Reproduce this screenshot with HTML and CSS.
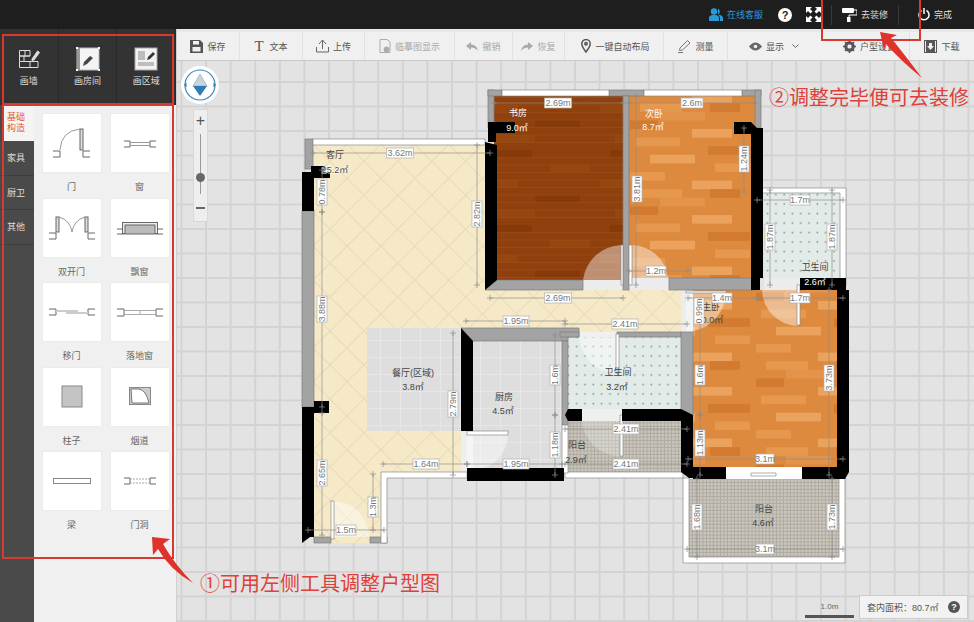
FILE: index.html
```html
<!DOCTYPE html>
<html lang="zh-CN">
<head>
    <meta charset="UTF-8">
    <title>户型编辑</title>
    <link rel="stylesheet" href="styles.css">
</head>
<body>
<div class="page">
    <!-- 顶栏 -->
    <header class="topbar">
        <a class="top-item top-blue"><svg width="14" height="13" viewBox="0 0 14 13"><circle cx="5" cy="3.5" r="3.2" fill="#2a9ad6"/><path d="M0 13V10Q0 7.5 3 7H7Q10 7.5 10 10V13Z" fill="#2a9ad6"/><path d="M9 .6A3.2 3.2 0 0 1 9 6.4Q13.8 7 14 10V13H11V10Q11 8 9 6.4Z" fill="#2a9ad6"/></svg>在线客服</a>
        <span class="top-help">?</span>
        <svg class="top-full" width="15" height="15" viewBox="0 0 15 15" fill="#fff"><path d="M0 0H6L4 2 6.500 4.500 4.500 6.500 2 4 0 6ZM15 0V6L13 4 10.500 6.500 8.500 4.500 11 2 9 0ZM0 15V9L2 11 4.500 8.500 6.500 10.500 4 13 6 15ZM15 15H9L11 13 8.500 10.500 10.500 8.500 13 11 15 9Z"/></svg>
        <a class="top-item top-btn top-decor"><svg width="15" height="14" viewBox="0 0 15 14" fill="#fff"><rect width="12" height="5" rx="1"/><path d="M12 2H15V7H7V9" fill="none" stroke="#fff"/><rect x="5" y="9" width="3.500" height="5"/></svg>去装修</a>
        <a class="top-item top-btn top-done"><svg width="12" height="13" viewBox="0 0 12 13" fill="none" stroke="#fff" stroke-width="1.500"><path d="M3.500 2.500A5 5 0 1 0 8.500 2.500"/><path d="M6 0V6"/></svg>完成</a>
    </header>

    <div class="main">
        <!-- 左侧工具 -->
        <aside class="side">
            <div class="draw-tools">
                <div class="draw-tool">
                    <svg width="24" height="24" viewBox="0 0 24 24" fill="none" stroke="#ddd"><path d="M2.500 3.500H13V9H2.500ZM2.500 9V14.500M2.500 14.500H21V20.500H2.500V14.500M8 3.500V9M13 14.500V20.500M7 9V14.500M2.500 9H13"/><path d="M15 12L20.500 4 22.500 5.500 17 13 15 13.500Z" fill="#ddd"/></svg>
                    <span>画墙</span>
                </div>
                <div class="draw-tool">
                    <svg width="24" height="24" viewBox="0 0 24 24"><rect x="1" y="1" width="22" height="22" fill="#f4f4f4" stroke="#bbb"/><path d="M1 1H4V23H1Z" fill="#999"/><path d="M7 19L8 15 14 9 17 11 11 17Z" fill="#444"/><rect x="0" y="0" width="2" height="2" fill="#fff"/><rect x="22" y="0" width="2" height="2" fill="#fff"/><rect x="0" y="22" width="2" height="2" fill="#fff"/><rect x="22" y="22" width="2" height="2" fill="#fff"/></svg>
                    <span>画房间</span>
                </div>
                <div class="draw-tool">
                    <svg width="24" height="24" viewBox="0 0 24 24"><rect x="1" y="1" width="22" height="22" fill="#f2f2f2" stroke="#aaa"/><rect x="4" y="4" width="7" height="9" fill="#bdbdbd"/><rect x="4" y="15" width="16" height="4" fill="#bdbdbd"/><path d="M13 13L14 10 19 5 21 7 16 12Z" fill="#333"/></svg>
                    <span>画区域</span>
                </div>
            </div>
            <div class="panel">
                <nav class="tabs">
                    <div class="tab tab-on">基础<br>构造</div>
                    <div class="tab">家具</div>
                    <div class="tab">厨卫</div>
                    <div class="tab">其他</div>
                </nav>
                <div class="parts">
                    <div class="part">
                        <div class="tile"><svg width="60" height="60" viewBox="0 0 60 60" class="glyph"><path d="M11 38H18V44H11M48 38H41V44H48"/><rect x="38" y="16" width="3" height="21" fill="#ddd"/><path d="M18 37Q19 18 38 16" stroke="#999"/></svg></div>
                        <span>门</span>
                    </div>
                    <div class="part">
                        <div class="tile"><svg width="60" height="60" viewBox="0 0 60 60" class="glyph"><path d="M14 28H20V34H14M46 28H40V34H46"/><path d="M20 29.500H40M20 32.500H40" stroke="#999"/></svg></div>
                        <span>窗</span>
                    </div>
                    <div class="part">
                        <div class="tile"><svg width="60" height="60" viewBox="0 0 60 60" class="glyph"><path d="M7 35H14V41H7M53 35H46V41H53"/><rect x="14" y="19" width="3" height="15" fill="#ddd"/><rect x="43" y="19" width="3" height="15" fill="#ddd"/><path d="M17 19Q28 22 30 34Q32 22 43 19" stroke="#999"/></svg></div>
                        <span>双开门</span>
                    </div>
                    <div class="part">
                        <div class="tile"><svg width="60" height="60" viewBox="0 0 60 60" class="glyph"><path d="M7 31H14V36H7M53 31H46V36H53"/><rect x="12.500" y="24.500" width="35" height="11" fill="#eee"/><rect x="15" y="27" width="30" height="9" fill="#bbb"/></svg></div>
                        <span>飘窗</span>
                    </div>
                    <div class="part">
                        <div class="tile"><svg width="60" height="60" viewBox="0 0 60 60" class="glyph"><path d="M7 27H14V33H7M53 27H46V33H53"/><rect x="14" y="28" width="22" height="2" fill="#ccc" stroke="none"/><rect x="24" y="30" width="22" height="2" fill="#ccc" stroke="none"/></svg></div>
                        <span>移门</span>
                    </div>
                    <div class="part">
                        <div class="tile"><svg width="60" height="60" viewBox="0 0 60 60" class="glyph"><path d="M7 27H14V34H7M53 27H46V34H53"/><path d="M14 28.500H46M14 32.500H46M30 29V32" stroke="#aaa"/></svg></div>
                        <span>落地窗</span>
                    </div>
                    <div class="part">
                        <div class="tile"><svg width="60" height="60" viewBox="0 0 60 60" class="glyph"><rect x="20" y="19" width="20" height="21" fill="#c4c4c4" stroke="#888"/></svg></div>
                        <span>柱子</span>
                    </div>
                    <div class="part">
                        <div class="tile"><svg width="60" height="60" viewBox="0 0 60 60" class="glyph"><rect x="19.500" y="20.500" width="21" height="17" fill="#ccc" stroke="#888"/><path d="M21 22H29Q36 23 39 36H22Z" fill="#fff" stroke="#777"/></svg></div>
                        <span>烟道</span>
                    </div>
                    <div class="part">
                        <div class="tile"><svg width="60" height="60" viewBox="0 0 60 60" class="glyph"><rect x="11.500" y="27.500" width="37" height="5" fill="#fff" stroke="#888"/></svg></div>
                        <span>梁</span>
                    </div>
                    <div class="part">
                        <div class="tile"><svg width="60" height="60" viewBox="0 0 60 60" class="glyph"><path d="M14 27H20V33H14M46 27H40V33H46"/><path d="M20 28H40M20 32H40" stroke="#aaa" stroke-dasharray="2 1"/></svg></div>
                        <span>门洞</span>
                    </div>
                </div>
            </div>
        </aside>

        <div class="work">
            <!-- 工具条 -->
            <div class="toolbar">
                <a class="tb w63"><svg width="13" height="13" viewBox="0 0 13 13"><path d="M0 0H10L13 3V13H0Z" fill="#555"/><rect x="3" y="1" width="6" height="3.500" fill="#f0f0f0"/><rect x="2.500" y="7" width="8" height="4.500" fill="#f0f0f0"/></svg>保存</a>
                <a class="tb w63"><span class="tb-t">T</span>文本</a>
                <a class="tb w62"><svg width="13" height="14" viewBox="0 0 13 14" fill="none" stroke="#666"><path d="M3 5L6.500 1 10 5M6.500 1V10M.5 8V13H12.500V8"/></svg>上传</a>
                <a class="tb w90 tb-off"><svg width="12" height="14" viewBox="0 0 12 14" fill="none" stroke="#aaa"><path d="M1 .5H8L11 3V13.500H1Z"/><circle cx="7.500" cy="10.500" r="2.500" fill="#aaa"/></svg>临摹图显示</a>
                <a class="tb w58 tb-off"><svg width="12" height="9" viewBox="0 0 12 9" fill="#aaa"><path d="M0 4L5 0V2.500Q11 2.500 12 9 9.500 5.500 5 5.500V8Z"/></svg>撤销</a>
                <a class="tb w52 tb-off"><svg width="12" height="9" viewBox="0 0 12 9" fill="#aaa"><path d="M12 4L7 0V2.500Q1 2.500 0 9 2.500 5.500 7 5.500V8Z"/></svg>恢复</a>
                <a class="tb w99 tb-pin"><svg width="10" height="14" viewBox="0 0 10 14" fill="none" stroke="#555" stroke-width="1.500"><path d="M5 13Q.8 7.500.8 4.800A4.200 4.200 0 0 1 9.200 4.800Q9.200 7.500 5 13Z"/><circle cx="5" cy="4.800" r="1.200"/></svg>一键自动布局</a>
                <a class="tb w64"><svg width="14" height="14" viewBox="0 0 14 14" fill="none" stroke="#777"><path d="M1 13.500H6M2.500 11.500L3 9 10.500 1.500 13 4 5.500 11Z"/></svg>测量</a>
                <a class="tb w102 tb-view"><svg width="13" height="9" viewBox="0 0 13 9"><path d="M0 4.500Q6.500 -3.500 13 4.500 6.500 12.500 0 4.500Z" fill="#666"/><circle cx="6.500" cy="4.500" r="1.800" fill="#f0f0f0"/></svg>显示<svg class="tb-caret" width="7" height="5" viewBox="0 0 7 5" fill="none" stroke="#666"><path d="M.5 .5L3.500 3.500 6.500 .5"/></svg></a>
                <a class="tb w80"><svg width="13" height="13" viewBox="0 0 13 13"><circle cx="6.500" cy="6.500" r="4" fill="none" stroke="#555" stroke-width="2.500"/><path d="M6.500 0V13M0 6.500H13M2 2L11 11M11 2L2 11" stroke="#555" stroke-width="1.500"/><circle cx="6.500" cy="6.500" r="2" fill="#f0f0f0"/></svg>户型设置</a>
                <a class="tb tb-last"><svg width="13" height="13" viewBox="0 0 13 13"><rect x=".5" y=".5" width="12" height="12" fill="none" stroke="#555"/><path d="M2 1H11V12H2Z" fill="#555"/><path d="M5 3H8V6H10L6.500 10 3 6H5Z" fill="#f0f0f0"/></svg>下载</a>
            </div>

            <!-- 画布 -->
            <div class="canvas">
                <svg class="plan" width="797" height="561" viewBox="177 61 797 561">
                    <defs>
                        <pattern id="wood" width="126" height="86" patternUnits="userSpaceOnUse">
                            <rect width="126" height="86" fill="#de8a3e"/>
                            <rect x="0" y="0" width="35" height="8.600" fill="#e6984f"/>
                            <rect x="62" y="8.600" width="40" height="8.600" fill="#eaa25c"/>
                            <rect x="10" y="17.200" width="42" height="8.600" fill="#e6984f"/>
                            <rect x="80" y="17.200" width="30" height="8.600" fill="#d17a30"/>
                            <rect x="30" y="25.800" width="45" height="8.600" fill="#e3934a"/>
                            <rect x="0" y="34.400" width="28" height="8.600" fill="#d17a30"/>
                            <rect x="62" y="43" width="40" height="8.600" fill="#eaa25c"/>
                            <rect x="5" y="51.600" width="45" height="8.600" fill="#e6984f"/>
                            <rect x="78" y="60.200" width="42" height="8.600" fill="#d17a30"/>
                            <rect x="20" y="68.800" width="45" height="8.600" fill="#eaa25c"/>
                            <rect x="85" y="77.400" width="35" height="8.600" fill="#e6984f"/>
                        </pattern>
                        <pattern id="woodDark" width="120" height="75" patternUnits="userSpaceOnUse">
                            <rect width="120" height="75" fill="#8f400c"/>
                            <rect x="10" y="0" width="42" height="7.500" fill="#873a09"/>
                            <rect x="70" y="15" width="40" height="7.500" fill="#964710"/>
                            <rect x="0" y="30" width="38" height="7.500" fill="#964710"/>
                            <rect x="55" y="45" width="45" height="7.500" fill="#873a09"/>
                            <rect x="15" y="60" width="40" height="7.500" fill="#964710"/>
                            <path d="M0 7.500H120M0 15H120M0 22.500H120M0 30H120M0 37.500H120M0 45H120M0 52.500H120M0 60H120M0 67.500H120" stroke="#9e5220" stroke-width=".5"/>
                        </pattern>
                        <pattern id="cream" width="24" height="24" patternUnits="userSpaceOnUse" patternTransform="rotate(45 313 145)">
                            <rect width="24" height="24" fill="#f5e9c7"/>
                            <path d="M0 .5H24M.5 0V24" stroke="#e8dbb8"/>
                        </pattern>
                        <pattern id="dots" width="8.300" height="9.500" patternUnits="userSpaceOnUse">
                            <rect width="8.300" height="9.500" fill="#e3ebe8"/>
                            <circle cx="4" cy="4.500" r=".9" fill="#7f9a92"/>
                        </pattern>
                        <pattern id="mosaic" width="3.500" height="3.500" patternUnits="userSpaceOnUse">
                            <rect width="3.500" height="3.500" fill="#aeaaa0"/>
                            <rect width="2.500" height="2.500" fill="#cbc7be"/>
                        </pattern>
                        <pattern id="tile" width="20" height="17" patternUnits="userSpaceOnUse">
                            <rect width="20" height="17" fill="#dedede"/>
                            <path d="M0 .5H20M.5 0V17" stroke="#e7e7e7"/>
                        </pattern>
                        <marker id="tick" markerWidth="6" markerHeight="6" refX="3" refY="3" markerUnits="userSpaceOnUse">
                            <path d="M3 0V6M0 3H6" stroke="#8c8c8c" stroke-opacity=".7"/>
                        </marker>
                    </defs>

                    <!-- 地面 -->
                    <path d="M313 145H490V290H684V332H565V328H461V472H381V537H370V543H331V537H313Z" fill="url(#cream)"/>
                    <rect x="367" y="328" width="94" height="103" fill="url(#tile)"/>
                    <rect x="473" y="341" width="89" height="127" fill="url(#tile)"/>
                    <rect x="461" y="431" width="12" height="41" fill="#eeeeee"/>
                    <rect x="494" y="96" width="129" height="184" fill="url(#woodDark)"/>
                    <rect x="629" y="96" width="126" height="182" fill="url(#wood)"/>
                    <path d="M764 193H840V290H764Z" fill="url(#dots)"/>
                    <rect x="764" y="278" width="36" height="12" fill="#ececec"/>
                    <rect x="693" y="290" width="144" height="177" fill="url(#wood)"/>
                    <rect x="568" y="337" width="113" height="72" fill="url(#dots)"/>
                    <rect x="568" y="421" width="113" height="51" fill="url(#mosaic)"/>
                    <rect x="689" y="479" width="150" height="78" fill="url(#mosaic)"/>

                    <!-- 门洞 -->
                    <rect x="583" y="280" width="40" height="10" fill="#ececec"/>
                    <rect x="629" y="278" width="40" height="12" fill="#ececec"/>
                    <rect x="681" y="290" width="12" height="42" fill="#ececec"/>
                    <rect x="579" y="332" width="38" height="5" fill="#f0f0f0"/>
                    <rect x="582" y="409" width="40" height="12" fill="#efefef"/>

                    <!-- 开门扇形 -->
                    <g fill="#fff" fill-opacity=".42">
                        <path d="M583 280A40 40 0 0 1 621 245V280Z"/>
                        <path d="M632 245A37 37 0 0 1 668 278H632Z"/>
                        <path d="M762 290A37 37 0 0 0 797 326V290Z"/>
                        <path d="M686 293H726A40 40 0 0 1 693 331H686Z"/>
                        <path d="M334 501A36 36 0 0 1 369 537H334Z"/>
                        <path d="M467 435H508A36 36 0 0 1 476 470H467Z"/>
                        <path d="M579 337A38 38 0 0 0 616 373V337Z"/>
                        <path d="M582 421A38 38 0 0 0 620 456V421Z" fill-opacity=".25"/>
                    </g>

                    <!-- 灰墙 -->
                    <g fill="#a3a3a3" stroke="#7d7d7d" stroke-width=".7">
                        <rect x="305" y="139" width="8" height="30"/>
                        <rect x="302" y="211" width="12" height="196"/>
                        <rect x="314" y="537" width="17" height="6"/>
                        <rect x="370" y="537" width="17" height="6"/>
                        <path d="M497 280H583V290H485Z"/>
                        <rect x="488" y="90" width="6" height="38"/>
                        <rect x="488" y="90" width="14" height="6"/>
                        <rect x="609" y="90" width="35" height="6"/>
                        <rect x="742" y="90" width="19" height="6"/>
                        <rect x="755" y="90" width="6" height="38"/>
                        <rect x="623" y="96" width="6" height="194"/>
                        <path d="M669 278H751L757 290H669Z"/>
                        <path d="M461 328H579V337H568V341H473Z"/>
                        <rect x="562" y="341" width="6" height="84"/>
                        <rect x="560" y="332" width="19" height="5"/>
                        <rect x="617" y="332" width="64" height="5"/>
                        <rect x="681" y="332" width="12" height="83"/>
                    </g>

                    <!-- 白墙窗户 -->
                    <g fill="#fff" stroke="#8a8a8a" stroke-width=".7">
                        <rect x="313" y="139" width="172" height="6"/>
                        <rect x="502" y="90" width="107" height="6"/>
                        <rect x="644" y="90" width="98" height="6"/>
                        <path d="M761 188H846V285H840V193H761Z"/>
                        <path d="M381 472H467V478H387V543H381Z" />
                        <rect x="565" y="472" width="118" height="6"/>
                        <path d="M683 478H689V557H839V478H845V563H683Z"/>
                        <rect x="726" y="467" width="76" height="12" stroke="none"/>
                        <path d="M751 473H776V476H751Z"/>
                        <rect x="562" y="425" width="6" height="48"/>
                        <rect x="621" y="245" width="2" height="40"/>
                        <rect x="629" y="245" width="3" height="40"/>
                        <rect x="797" y="285" width="3" height="40"/>
                        <rect x="686" y="291" width="40" height="2"/>
                        <rect x="331" y="501" width="3" height="38"/>
                        <rect x="467" y="431" width="41" height="4"/>
                        <rect x="616" y="334" width="3" height="39"/>
                        <rect x="620" y="415" width="3" height="41"/>
                    </g>

                    <!-- 黑墙 -->
                    <g fill="#000">
                        <path d="M302 172H311V166H325V172H330V178H314V211H302Z"/>
                        <path d="M302 407H314V401H329V413H314V537H310L302 543Z"/>
                        <path d="M485 142L497 145V280L485 290Z"/>
                        <path d="M488 128V122H515V133H496V142H488Z"/>
                        <path d="M734 122H751L757 128H763V278H760V290H751V134H734Z"/>
                        <path d="M800 278H846V292H837V290H800Z"/>
                        <rect x="837" y="290" width="12" height="182"/>
                        <path d="M461 328L473 341V431H461Z"/>
                        <path d="M467 468H564V481H467Z"/>
                        <path d="M568 409H582V421H568L565 415Z"/>
                        <path d="M622 409H681L693 415V478H689L681 472V421H622Z"/>
                        <rect x="693" y="467" width="33" height="12"/>
                        <rect x="802" y="467" width="35" height="12"/>
                        <path d="M837 467H849V472L845 479H837Z"/>
                    </g>

                    <!-- 房间名 -->
                    <g class="room">
                        <text x="518" y="116" class="room-w">书房</text>
                        <text x="517" y="131" class="room-w">9.0㎡</text>
                        <text x="335" y="158">客厅</text>
                        <text x="335" y="173" class="room-h">25.2㎡</text>
                        <text x="654" y="117" class="room-w">次卧</text>
                        <text x="653" y="130" class="room-w">8.7㎡</text>
                        <text x="815" y="270">卫生间</text>
                        <text x="815" y="285" class="room-w">2.6㎡</text>
                        <text x="711" y="310">主卧</text>
                        <text x="710" y="323">10.0㎡</text>
                        <text x="413" y="376">餐厅(区域)</text>
                        <text x="413" y="390">3.8㎡</text>
                        <text x="504" y="400">厨房</text>
                        <text x="503" y="414">4.5㎡</text>
                        <text x="618" y="375">卫生间</text>
                        <text x="617" y="390">3.2㎡</text>
                        <text x="577" y="448">阳台</text>
                        <text x="576" y="463">2.9㎡</text>
                        <text x="764" y="512">阳台</text>
                        <text x="763" y="526">4.6㎡</text>
                    </g>

                    <!-- 尺寸线 -->
                    <path class="dim" marker-start="url(#tick)" marker-mid="url(#tick)" marker-end="url(#tick)" d="M313 153H490M494 103H623M629 103H755M490 298H623M466 321H565M565 324H687M629 271H688M757 200H843M688 298H757M757 298H843M322 170V212M322 212V407M477 145V285M636 96V285M744 128V192M770 190V285M832 190V285M453 333V475M555 335V415M555 415V475M383 464H467M467 464H562M322 413V535M308 530H384M373 474V530M565 429H687M565 464H687M700 300V415M700 415V475M829 290V475M688 459H843M697 479V557M832 479V557M687 549H843"/>

                    <!-- 尺寸标注 -->
                    <g class="lab">
                        <g transform="translate(400 153)"><rect x="-13.500" y="-5" width="27" height="10"/><text y="3">3.62m</text></g>
                        <g transform="translate(558 103)"><rect x="-13.500" y="-5" width="27" height="10"/><text y="3">2.69m</text></g>
                        <g transform="translate(692 103)"><rect x="-11" y="-5" width="22" height="10"/><text y="3">2.6m</text></g>
                        <g transform="translate(558 298)"><rect x="-13.500" y="-5" width="27" height="10"/><text y="3">2.69m</text></g>
                        <g transform="translate(516 321)"><rect x="-13" y="-5" width="26" height="10"/><text y="3">1.95m</text></g>
                        <g transform="translate(625 324)"><rect x="-13" y="-5" width="26" height="10"/><text y="3">2.41m</text></g>
                        <g transform="translate(656 271)"><rect x="-10" y="-5" width="20" height="10"/><text y="3">1.2m</text></g>
                        <g transform="translate(800 200)"><rect x="-10" y="-5" width="20" height="10"/><text y="3">1.7m</text></g>
                        <g transform="translate(722 298)"><rect x="-10" y="-5" width="20" height="10"/><text y="3">1.4m</text></g>
                        <g transform="translate(800 298)"><rect x="-10" y="-5" width="20" height="10"/><text y="3">1.7m</text></g>
                        <g transform="translate(426 464)"><rect x="-13" y="-5" width="26" height="10"/><text y="3">1.64m</text></g>
                        <g transform="translate(516 464)"><rect x="-13" y="-5" width="26" height="10"/><text y="3">1.95m</text></g>
                        <g transform="translate(346 530)"><rect x="-10" y="-5" width="20" height="10"/><text y="3">1.5m</text></g>
                        <g transform="translate(626 429)"><rect x="-13" y="-5" width="26" height="10"/><text y="3">2.41m</text></g>
                        <g transform="translate(626 464)"><rect x="-13" y="-5" width="26" height="10"/><text y="3">2.41m</text></g>
                        <g transform="translate(765 459)"><rect x="-9" y="-5" width="18" height="10"/><text y="3">3.1m</text></g>
                        <g transform="translate(765 549)"><rect x="-9" y="-5" width="18" height="10"/><text y="3">3.1m</text></g>
                        <g transform="translate(322 192) rotate(-90)"><rect x="-13" y="-5" width="26" height="10"/><text y="3">0.78m</text></g>
                        <g transform="translate(322 309) rotate(-90)"><rect x="-13" y="-5" width="26" height="10"/><text y="3">3.88m</text></g>
                        <g transform="translate(322 473) rotate(-90)"><rect x="-13" y="-5" width="26" height="10"/><text y="3">2.65m</text></g>
                        <g transform="translate(477 214) rotate(-90)"><rect x="-13" y="-5" width="26" height="10"/><text y="3">2.82m</text></g>
                        <g transform="translate(637 189) rotate(-90)"><rect x="-13" y="-5" width="26" height="10"/><text y="3">3.81m</text></g>
                        <g transform="translate(744 159) rotate(-90)"><rect x="-13" y="-5" width="26" height="10"/><text y="3">1.24m</text></g>
                        <g transform="translate(770 237) rotate(-90)"><rect x="-13" y="-5" width="26" height="10"/><text y="3">1.87m</text></g>
                        <g transform="translate(832 237) rotate(-90)"><rect x="-13" y="-5" width="26" height="10"/><text y="3">1.87m</text></g>
                        <g transform="translate(699 311) rotate(-90)"><rect x="-13" y="-5" width="26" height="10"/><text y="3">0.99m</text></g>
                        <g transform="translate(453 404) rotate(-90)"><rect x="-13" y="-5" width="26" height="10"/><text y="3">2.79m</text></g>
                        <g transform="translate(555 375) rotate(-90)"><rect x="-10" y="-5" width="20" height="10"/><text y="3">1.6m</text></g>
                        <g transform="translate(555 445) rotate(-90)"><rect x="-13" y="-5" width="26" height="10"/><text y="3">1.18m</text></g>
                        <g transform="translate(373 507) rotate(-90)"><rect x="-10" y="-5" width="20" height="10"/><text y="3">1.3m</text></g>
                        <g transform="translate(700 375) rotate(-90)"><rect x="-10" y="-5" width="20" height="10"/><text y="3">1.6m</text></g>
                        <g transform="translate(700 443) rotate(-90)"><rect x="-13" y="-5" width="26" height="10"/><text y="3">1.13m</text></g>
                        <g transform="translate(829 378) rotate(-90)"><rect x="-13" y="-5" width="26" height="10"/><text y="3">3.73m</text></g>
                        <g transform="translate(697 517) rotate(-90)"><rect x="-13" y="-5" width="26" height="10"/><text y="3">1.68m</text></g>
                        <g transform="translate(832 517) rotate(-90)"><rect x="-13" y="-5" width="26" height="10"/><text y="3">1.73m</text></g>
                    </g>
                </svg>

                <!-- 指南针 -->
                <svg class="compass" width="38" height="38" viewBox="0 0 38 38">
                    <circle cx="19" cy="19" r="19" fill="#fff"/>
                    <circle cx="19" cy="19" r="15" fill="none" stroke="#3f86ba" stroke-width="1.200"/>
                    <path d="M19 8L26 20H12Z" fill="#c9d4dc" stroke="#8aa6b8" stroke-width=".6"/>
                    <path d="M12 20H26L19 30Z" fill="#2f7db3"/>
                    <path d="M3 19L5.500 16.500V21.500ZM35 19L32.500 16.500V21.500Z" fill="#2f7db3"/>
                </svg>

                <!-- 缩放 -->
                <div class="zoom">
                    <span class="zoom-plus">+</span>
                    <div class="zoom-track"><i class="zoom-knob"></i></div>
                    <span class="zoom-minus"></span>
                </div>

                <div class="scale"><span>1.0m</span><i></i></div>
                <div class="area">套内面积：80.7㎡<b>?</b></div>
            </div>
        </div>
    </div>

    <!-- 标注 -->
    <svg class="notes" width="974" height="622" viewBox="0 0 974 622">
        <g fill="none" stroke="#d63a34" stroke-width="2">
            <path d="M822 0V40H920V0"/>
            <rect x="3" y="35" width="170" height="69" stroke="#d8392c"/>
            <rect x="3" y="105" width="170" height="453"/>
        </g>
        <g fill="#e0322c">
            <path d="M880 32L897 35 891 38Q905 55 922 78 900 60 886 44L884 50Z"/>
            <path d="M152 537L170 539 163 544Q175 565 193 583 170 570 158 549L153 555Z"/>
        </g>
        <text x="769" y="105" class="note-t">②调整完毕便可去装修</text>
        <text x="200" y="591" class="note-t">①可用左侧工具调整户型图</text>
    </svg>
</div>
</body>
</html>
```

FILE: styles.css
```css
*{
    margin: 0;
    padding: 0;
    box-sizing: border-box;
}
body{
    font-family: "Liberation Sans", "Noto Sans CJK SC", sans-serif;
    font-size: 9px;
    color: #555;
    overflow: hidden;
}
.page{
    position: relative;
    width: 974px;
    height: 622px;
    overflow: hidden;
    display: flex;
    flex-direction: column;
}
/* 顶栏 */
.topbar{
    height: 29px;
    flex: none;
    background-color: #1e1e1e;
    display: flex;
    justify-content: flex-end;
    align-items: center;
    color: #ddd;
}
.top-item{
    display: flex;
    align-items: center;
    gap: 4px;
}
.top-blue{
    color: #2a9ad6;
    margin-right: 15px;
}
.top-help{
    width: 14px;
    height: 14px;
    border-radius: 50%;
    background-color: #fff;
    color: #1e1e1e;
    font-size: 11px;
    font-weight: bold;
    line-height: 14px;
    text-align: center;
    margin-right: 14px;
}
.top-full{
    margin-right: 10px;
}
.top-btn{
    height: 20px;
    border-left: 1px solid #3a3a3a;
}
.top-decor{
    width: 67px;
    padding-left: 10px;
}
.top-done{
    width: 76px;
    padding-left: 19px;
}
.main{
    flex: 1;
    display: flex;
    min-height: 0;
}
/* 左侧 */
.side{
    width: 177px;
    flex: none;
    display: flex;
    flex-direction: column;
    border-right: 1px solid #cfcfcf;
}
.draw-tools{
    height: 76px;
    flex: none;
    background-color: #333;
    display: flex;
}
.draw-tool{
    flex: 1;
    display: flex;
    flex-direction: column;
    align-items: center;
    padding-top: 18px;
    gap: 3px;
    color: #ddd;
    border-right: 1px solid #292929;
}
.panel{
    flex: 1;
    display: flex;
    background-color: #f0f0f0;
    min-height: 0;
}
.tabs{
    width: 34px;
    flex: none;
    background-color: #4a4a4a;
}
.tab{
    height: 34.500px;
    color: #ddd;
    border-bottom: 1px solid #3d3d3d;
    padding-left: 7px;
    line-height: 34px;
}
.tab-on{
    height: 36px;
    margin-left: 4px;
    padding: 7px 0 0 3px;
    line-height: 11px;
    background-color: #f4f4f4;
    color: #e8552a;
    border-bottom: 0;
}
.parts{
    padding: 8px 0 0 7.500px;
    display: grid;
    grid-template-columns: 60px 60px;
    grid-auto-rows: 84.500px;
    column-gap: 8px;
}
.part{
    text-align: center;
    color: #666;
}
.part span{
    display: block;
    margin-top: 9px;
    line-height: 10px;
}
.tile{
    width: 60px;
    height: 60px;
    background-color: #fff;
    border: 1px solid #ebebeb;
}
.tile svg{
    display: block;
    margin: -1px;
}
.glyph{
    fill: none;
    stroke: #666;
}
/* 工具条 */
.work{
    flex: 1;
    display: flex;
    flex-direction: column;
    min-width: 0;
}
.toolbar{
    height: 32px;
    flex: none;
    background-color: #f0f0f0;
    border-top: 3px solid #e8e8e8;
    border-bottom: 1px solid #c8c8c8;
    display: flex;
}
.tb{
    display: flex;
    align-items: center;
    justify-content: center;
    gap: 4px;
    color: #555;
    border-right: 1px solid #e2e2e2;
    flex: none;
}
.tb-off{
    color: #aaa;
}
.tb-t{
    font-family: "Liberation Serif", serif;
    font-size: 15px;
    color: #555;
    margin-right: 2px;
}
.tb-pin{
    padding-left: 3px;
}
.tb-caret{
    margin-left: 4px;
}
.tb-view{
    border-right: 0;
    justify-content: flex-start;
    padding-left: 21px;
}
.tb-last{
    flex: 1;
    border-right: 0;
}
.w52{ width: 52px; }
.w58{ width: 58px; }
.w62{ width: 62px; }
.w63{ width: 63px; }
.w64{ width: 64px; }
.w80{ width: 80px; }
.w90{ width: 90px; }
.w99{ width: 99px; }
.w102{ width: 102px; }
/* 画布 */
.canvas{
    position: relative;
    flex: 1;
    background-color: #e3e3e3;
    background-image:
        linear-gradient(to right, #d3d3d3 1.500px, transparent 1.500px),
        linear-gradient(to bottom, #d3d3d3 1.500px, transparent 1.500px);
    background-size: 24.600px 24.500px;
    background-position: 3.500px 20px;
    overflow: hidden;
}
.plan{
    position: absolute;
    left: 0;
    top: 0;
}
.dim{
    fill: none;
    stroke: #8c8c8c;
    stroke-opacity: .65;
    stroke-width: 1;
}
.lab rect{
    fill: #fff;
    stroke: #b0b0b0;
    stroke-width: .7;
}
.lab text{
    font-size: 9px;
    fill: #777;
    text-anchor: middle;
}
.room text{
    font-size: 9px;
    fill: #444;
    text-anchor: middle;
}
.room .room-w{
    fill: #fff;
}
.room .room-h{
    stroke: #fff;
    stroke-width: 1px;
    paint-order: stroke;
}
.compass{
    position: absolute;
    left: 4px;
    top: 5px;
}
.zoom{
    position: absolute;
    left: 16px;
    top: 48px;
    width: 15px;
    height: 113px;
    background-color: #eee;
    border: 1px solid #d8d8d8;
    display: flex;
    flex-direction: column;
    align-items: center;
}
.zoom-plus{
    font-size: 16px;
    line-height: 22px;
    height: 24px;
    color: #555;
}
.zoom-track{
    position: relative;
    width: 1px;
    height: 60px;
    background-color: #999;
}
.zoom-knob{
    position: absolute;
    left: -4px;
    top: 39px;
    width: 9px;
    height: 9px;
    border-radius: 50%;
    background-color: #666;
}
.zoom-minus{
    width: 9px;
    height: 1.500px;
    background-color: #666;
    margin-top: 13px;
}
.scale{
    position: absolute;
    left: 628px;
    top: 541px;
    width: 49px;
    text-align: center;
    line-height: 10px;
    color: #666;
    font-size: 8px;
}
.scale i{
    display: block;
    height: 3px;
    margin-top: 3px;
    background-color: #555;
}
.area{
    position: absolute;
    right: 6px;
    bottom: 3px;
    width: 109px;
    height: 24px;
    padding-left: 7px;
    background-color: #f2f2f2;
    border: 1px solid #ccc;
    display: flex;
    align-items: center;
    justify-content: space-between;
    padding-right: 7px;
}
.area b{
    width: 12px;
    height: 12px;
    border-radius: 50%;
    background-color: #555;
    color: #fff;
    line-height: 12px;
    text-align: center;
}
/* 标注 */
.notes{
    position: absolute;
    left: 0;
    top: 0;
    pointer-events: none;
}
.note-t{
    font-size: 20px;
    fill: #e0403a;
}
```
